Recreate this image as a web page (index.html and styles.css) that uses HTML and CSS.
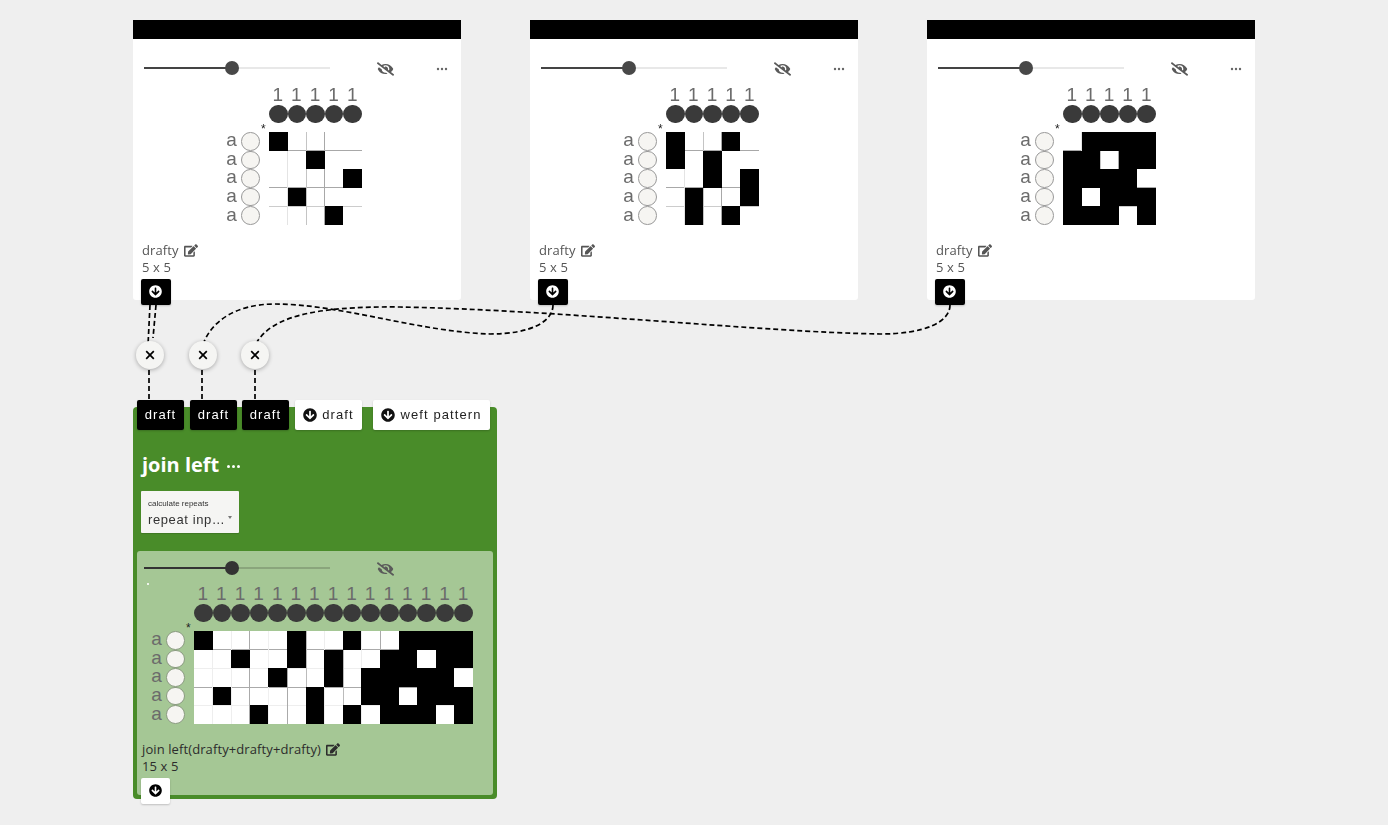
FILE: index.html
```html
<!DOCTYPE html>
<html lang="en">
<head>
<meta charset="utf-8">
<title>Drafts</title>
<link rel="stylesheet" href="styles.css">
</head>
<body>
<svg width="0" height="0" class="defs">
  <symbol id="i-edit" viewBox="0 0 576 512"><path d="M402.6 83.2l90.2 90.2c3.8 3.8 3.8 10 0 13.8L274.4 405.6l-92.8 10.3c-12.4 1.4-22.9-9.1-21.5-21.5l10.3-92.8L388.8 83.2c3.8-3.8 10-3.8 13.8 0zm162-22.9l-48.8-48.8c-15.2-15.2-39.9-15.2-55.2 0l-35.4 35.4c-3.8 3.8-3.8 10 0 13.8l90.2 90.2c3.8 3.8 10 3.8 13.8 0l35.4-35.4c15.2-15.3 15.2-40 0-55.2zM384 346.2V448H64V128h229.8c3.2 0 6.2-1.3 8.5-3.5l40-40c7.6-7.6 2.2-20.5-8.5-20.5H48C21.5 64 0 85.5 0 112v352c0 26.5 21.5 48 48 48h352c26.5 0 48-21.5 48-48V306.2c0-10.7-12.9-16-20.5-8.5l-40 40c-2.2 2.3-3.5 5.3-3.5 8.5z"/></symbol>
  <symbol id="i-down" viewBox="0 0 512 512"><path d="M504 256c0 137-111 248-248 248S8 393 8 256 119 8 256 8s248 111 248 248zm-143.6-28.9L288 300.1V120c0-13.3-10.7-24-24-24h-16c-13.3 0-24 10.7-24 24v180.1l-72.4-73c-9.4-9.5-24.7-9.5-34.1-.1l-10.9 11c-9.4 9.4-9.4 24.6 0 33.9L239 404.3c9.4 9.4 24.6 9.4 33.9 0l132.7-132.4c9.4-9.4 9.4-24.6 0-33.9l-10.9-11c-9.5-9.4-24.8-9.4-34.3.1z"/></symbol>
  <symbol id="i-eye" viewBox="0 0 640 512"><path d="M320 400c-75.85 0-137.25-58.71-142.9-133.11L72.2 185.82c-13.79 17.3-26.48 35.59-36.72 55.59a32.35 32.35 0 0 0 0 29.19C89.71 376.41 197.07 448 320 448c26.91 0 52.87-4 77.89-10.46L346 397.39a144.13 144.13 0 0 1-26 2.61zm313.82 58.1l-110.55-85.44a331.25 331.25 0 0 0 81.25-102.07 32.35 32.35 0 0 0 0-29.19C550.29 135.59 442.93 64 320 64a308.15 308.15 0 0 0-147.32 37.7L45.46 3.37A16 16 0 0 0 23 6.18L3.37 31.45A16 16 0 0 0 6.18 53.9l588.36 454.73a16 16 0 0 0 22.46-2.81l19.64-25.27a16 16 0 0 0-2.82-22.45zm-183.72-142l-39.3-30.38A94.75 94.75 0 0 0 416 256a94.76 94.76 0 0 0-121.31-92.21A47.65 47.65 0 0 1 304 192a46.64 46.64 0 0 1-1.54 10l-73.61-56.89A142.31 142.31 0 0 1 320 112a143.92 143.92 0 0 1 144 144c0 21.63-5.29 41.79-13.9 60.11z"/></symbol>
  <symbol id="i-dots" viewBox="0 0 12 4"><circle cx="2" cy="2" r="1.2"/><circle cx="6" cy="2" r="1.2"/><circle cx="10" cy="2" r="1.2"/></symbol>
  <symbol id="i-x" viewBox="0 0 10 10"><path d="M1.2 1.2l7.6 7.6M8.8 1.2l-7.6 7.6"/></symbol>
</svg>

<main class="canvas">
  <svg class="wires" width="1388" height="825" viewBox="0 0 1388 825">
    <path d="M150 305L148 345M149 370V400M156 305L153 338"/>
    <path d="M553 305C553 322 530 334 490 334C420 332 340 304 275 304C235 304 212 322 204 342M202 370V400"/>
    <path d="M950 305C950 322 925 334 880 334C760 332 560 310 400 307C310 306 272 318 257 342M255 370V400"/>
  </svg>

  <section class="node node-a">
    <div class="node-bar"></div>
    <div class="slider-row">
      <div class="slider"><span class="thumb"></span></div>
      <svg class="eye"><use href="#i-eye"/></svg>
      <svg class="more"><use href="#i-dots"/></svg>
    </div>
    <div class="draft draft-node">
      <div class="nums five"><span>1</span><span>1</span><span>1</span><span>1</span><span>1</span></div>
      <div class="wefts five"><span></span><span></span><span></span><span></span><span></span></div>
      <div class="body">
        <div class="rows"><div class="r"><span>a</span><i></i></div><div class="r"><span>a</span><i></i></div><div class="r"><span>a</span><i></i></div><div class="r"><span>a</span><i></i></div><div class="r"><span>a</span><i></i></div></div>
        <div class="cells five small">
          <i class="on"></i><i></i><i></i><i></i><i></i>
          <i></i><i></i><i class="on"></i><i></i><i></i>
          <i></i><i></i><i></i><i></i><i class="on"></i>
          <i></i><i class="on"></i><i></i><i></i><i></i>
          <i></i><i></i><i></i><i class="on"></i><i></i>
        </div>
      </div>
    </div>
    <div class="meta"><div>drafty <svg class="edit"><use href="#i-edit"/></svg></div><div>5 x 5</div></div>
    <button class="dl"><svg><use href="#i-down"/></svg></button>
  </section>

  <section class="node node-b">
    <div class="node-bar"></div>
    <div class="slider-row">
      <div class="slider"><span class="thumb"></span></div>
      <svg class="eye"><use href="#i-eye"/></svg>
      <svg class="more"><use href="#i-dots"/></svg>
    </div>
    <div class="draft draft-node">
      <div class="nums five"><span>1</span><span>1</span><span>1</span><span>1</span><span>1</span></div>
      <div class="wefts five"><span></span><span></span><span></span><span></span><span></span></div>
      <div class="body">
        <div class="rows"><div class="r"><span>a</span><i></i></div><div class="r"><span>a</span><i></i></div><div class="r"><span>a</span><i></i></div><div class="r"><span>a</span><i></i></div><div class="r"><span>a</span><i></i></div></div>
        <div class="cells five small">
          <i class="on"></i><i></i><i></i><i class="on"></i><i></i>
          <i class="on"></i><i></i><i class="on"></i><i></i><i></i>
          <i></i><i></i><i class="on"></i><i></i><i class="on"></i>
          <i></i><i class="on"></i><i></i><i></i><i class="on"></i>
          <i></i><i class="on"></i><i></i><i class="on"></i><i></i>
        </div>
      </div>
    </div>
    <div class="meta"><div>drafty <svg class="edit"><use href="#i-edit"/></svg></div><div>5 x 5</div></div>
    <button class="dl"><svg><use href="#i-down"/></svg></button>
  </section>

  <section class="node node-c">
    <div class="node-bar"></div>
    <div class="slider-row">
      <div class="slider"><span class="thumb"></span></div>
      <svg class="eye"><use href="#i-eye"/></svg>
      <svg class="more"><use href="#i-dots"/></svg>
    </div>
    <div class="draft draft-node">
      <div class="nums five"><span>1</span><span>1</span><span>1</span><span>1</span><span>1</span></div>
      <div class="wefts five"><span></span><span></span><span></span><span></span><span></span></div>
      <div class="body">
        <div class="rows"><div class="r"><span>a</span><i></i></div><div class="r"><span>a</span><i></i></div><div class="r"><span>a</span><i></i></div><div class="r"><span>a</span><i></i></div><div class="r"><span>a</span><i></i></div></div>
        <div class="cells five small">
          <i></i><i class="on"></i><i class="on"></i><i class="on"></i><i class="on"></i>
          <i class="on"></i><i class="on"></i><i></i><i class="on"></i><i class="on"></i>
          <i class="on"></i><i class="on"></i><i class="on"></i><i class="on"></i><i></i>
          <i class="on"></i><i></i><i class="on"></i><i class="on"></i><i class="on"></i>
          <i class="on"></i><i class="on"></i><i class="on"></i><i></i><i class="on"></i>
        </div>
      </div>
    </div>
    <div class="meta"><div>drafty <svg class="edit"><use href="#i-edit"/></svg></div><div>5 x 5</div></div>
    <button class="dl"><svg><use href="#i-down"/></svg></button>
  </section>

  <button class="unlink u1"><svg><use href="#i-x"/></svg></button>
  <button class="unlink u2"><svg><use href="#i-x"/></svg></button>
  <button class="unlink u3"><svg><use href="#i-x"/></svg></button>

  <section class="op">
    <div class="ports">
      <button class="port in">draft</button>
      <button class="port in">draft</button>
      <button class="port in">draft</button>
      <button class="port out"><svg><use href="#i-down"/></svg>draft</button>
      <button class="port out wide"><svg><use href="#i-down"/></svg>weft pattern</button>
    </div>
    <h2 class="op-title">join left<svg class="op-more"><use href="#i-dots"/></svg></h2>
    <div class="select">
      <div class="select-label">calculate repeats</div>
      <div class="select-value"><span>repeat inp…</span><b class="caret"></b></div>
    </div>
    <div class="result">
      <div class="slider-row">
        <div class="slider slider-dark"><span class="thumb"></span></div>
        <svg class="eye"><use href="#i-eye"/></svg>
      </div>
      <div class="speck"></div>
      <div class="draft draft-op">
        <div class="nums fifteen"><span>1</span><span>1</span><span>1</span><span>1</span><span>1</span><span>1</span><span>1</span><span>1</span><span>1</span><span>1</span><span>1</span><span>1</span><span>1</span><span>1</span><span>1</span></div>
        <div class="wefts fifteen"><span></span><span></span><span></span><span></span><span></span><span></span><span></span><span></span><span></span><span></span><span></span><span></span><span></span><span></span><span></span></div>
        <div class="body">
          <div class="rows"><div class="r"><span>a</span><i></i></div><div class="r"><span>a</span><i></i></div><div class="r"><span>a</span><i></i></div><div class="r"><span>a</span><i></i></div><div class="r"><span>a</span><i></i></div></div>
          <div class="cells fifteen large">
            <i class="on"></i><i></i><i></i><i></i><i></i><i class="on"></i><i></i><i></i><i class="on"></i><i></i><i></i><i class="on"></i><i class="on"></i><i class="on"></i><i class="on"></i>
            <i></i><i></i><i class="on"></i><i></i><i></i><i class="on"></i><i></i><i class="on"></i><i></i><i></i><i class="on"></i><i class="on"></i><i></i><i class="on"></i><i class="on"></i>
            <i></i><i></i><i></i><i></i><i class="on"></i><i></i><i></i><i class="on"></i><i></i><i class="on"></i><i class="on"></i><i class="on"></i><i class="on"></i><i class="on"></i><i></i>
            <i></i><i class="on"></i><i></i><i></i><i></i><i></i><i class="on"></i><i></i><i></i><i class="on"></i><i class="on"></i><i></i><i class="on"></i><i class="on"></i><i class="on"></i>
            <i></i><i></i><i></i><i class="on"></i><i></i><i></i><i class="on"></i><i></i><i class="on"></i><i></i><i class="on"></i><i class="on"></i><i class="on"></i><i></i><i class="on"></i>
          </div>
        </div>
      </div>
      <div class="meta meta-op"><div>join left(drafty+drafty+drafty) <svg class="edit"><use href="#i-edit"/></svg></div><div>15 x 5</div></div>
      <button class="dl dl-light"><svg><use href="#i-down"/></svg></button>
    </div>
  </section>
</main>
</body>
</html>
```
FILE: styles.css
```css
* { box-sizing: border-box; }
html, body { margin: 0; padding: 0; height: 100%; background: #efefef; overflow: hidden; }
button { border: 0; padding: 0; margin: 0; font: inherit; cursor: pointer; }
.defs { position: absolute; }

.canvas { position: relative; width: 1388px; height: 825px; overflow: hidden; font-family: "Open Sans", sans-serif; }

.wires { position: absolute; left: 0; top: 0; z-index: 1; }
.wires path { fill: none; stroke: #000; stroke-width: 1.7; stroke-dasharray: 5 3; }

.node { position: absolute; top: 20px; width: 328px; height: 280px; background: #fff; border-radius: 0 0 3px 3px; }
.node-a { left: 133px; }
.node-b { left: 530px; }
.node-c { left: 927px; }
.node-bar { height: 19px; background: #000; }

.slider-row { display: flex; align-items: center; height: 14px; margin-top: 22px; padding-left: 11px; }
.slider { position: relative; width: 186px; height: 2px; background: linear-gradient(to right, #444 0 88px, #e8e8e8 88px); }
.slider-dark { background: linear-gradient(to right, #333 0 88px, #8aa57c 88px); }
.thumb { position: absolute; left: 81px; top: -6px; width: 14px; height: 14px; border-radius: 50%; background: #484848; }
.slider-dark .thumb { background: #333; }
.eye { width: 17px; height: 14px; margin: 2px 0 0 47px; fill: #5a5a5a; }
.more { width: 12px; height: 4px; margin: 2px 0 0 42px; fill: #666; }

.draft { position: relative; }
.draft-node { margin-left: 136px; margin-top: 11px; }
.draft-op { margin-left: 57px; margin-top: 0; }

.nums, .wefts, .cells { display: grid; grid-auto-rows: 18.6px; }
.five { grid-template-columns: repeat(5, 18.6px); width: 93px; }
.fifteen { grid-template-columns: repeat(15, 18.6px); width: 279px; }
.nums { font: 19px/18px "Liberation Sans", Arial, sans-serif; color: #6b6b6b; text-align: center; }
.nums span { padding-right: 1px; }
.wefts span { border-radius: 50%; background: #3a3a3a; }
.wefts { margin-bottom: 8.8px; position: relative; }
.wefts::after { content: "*"; position: absolute; left: -8px; top: 17px; font: 12px/14px "Liberation Sans", Arial, sans-serif; color: #222; }

.body { position: relative; width: max-content; }
.rows { position: absolute; right: 100%; top: 0; padding-right: 9.5px; }
.r { display: flex; align-items: center; height: 18.6px; gap: 4px; font: 19px/18px "Liberation Sans", Arial, sans-serif; color: #6b6b6b; }
.r span { position: relative; top: -1px; }
.r i { display: block; width: 18.6px; height: 18.6px; border-radius: 50%; background: #f6f5f2; border: 1px solid #999; }
.draft-op .r i { border-color: #8a9a80; }

.cells { position: relative; background: #fff; }
.cells i { display: block; background: #fff; }
.cells i.on { background: #000; }
.cells::after { content: ""; position: absolute; inset: 0; mix-blend-mode: multiply; background-repeat: no-repeat; }
.small::after {
  background-image: linear-gradient(#e4e4e4, #e4e4e4), linear-gradient(#c4c4c4, #c4c4c4), linear-gradient(#a8a8a8, #a8a8a8), linear-gradient(#a8a8a8, #a8a8a8), linear-gradient(#a8a8a8, #a8a8a8), linear-gradient(#ccc, #ccc);
  background-size: 1px 100%, 1px 100%, 1px 100%, 100% 1px, 100% 1px, 100% 1px;
  background-position: 18px 0, 37px 0, 55px 0, 0 18px, 0 55px, 0 74px;
}
.large::after {
  background-image: linear-gradient(#eee, #eee), linear-gradient(#eee, #eee), linear-gradient(#aaa, #aaa), linear-gradient(#f0f0f0, #f0f0f0), linear-gradient(#aaa, #aaa), linear-gradient(#bbb, #bbb), linear-gradient(#eee, #eee), linear-gradient(#bbb, #bbb), linear-gradient(#eee, #eee), linear-gradient(#aaa, #aaa), linear-gradient(#aaa, #aaa), linear-gradient(#eee, #eee), linear-gradient(#aaa, #aaa), linear-gradient(#eee, #eee);
  background-size: 1px 100%, 1px 100%, 1px 100%, 1px 100%, 1px 100%, 1px 100%, 1px 100%, 1px 100%, 1px 100%, 1px 100%, 100% 1px, 100% 1px, 100% 1px, 100% 1px;
  background-position: 18px 0, 37px 0, 55px 0, 74px 0, 93px 0, 112px 0, 130px 0, 149px 0, 167px 0, 186px 0, 0 18px, 0 37px, 0 56px, 0 74px;
}

.meta { margin: 17px 0 0 9px; font-size: 13px; line-height: 17px; letter-spacing: .1px; color: #555; }
.edit { width: 14px; height: 13px; margin-left: 2px; vertical-align: -2px; fill: currentColor; }

.dl { display: flex; align-items: center; justify-content: center; width: 30px; height: 26px; margin: 3px 0 0 8px; padding-right: 1px; background: #000; border-radius: 2px; position: relative; z-index: 2; box-shadow: 0 1px 2px rgba(0,0,0,.2); }
.dl svg { width: 13px; height: 13px; fill: #fff; }
.dl-light { width: 29px; padding-right: 0; background: #fff; }
.dl-light svg { fill: #000; }

.unlink { position: absolute; top: 341px; width: 28px; height: 28px; display: flex; align-items: center; justify-content: center; border-radius: 50%; background: #f5f5f3; box-shadow: 0 1px 4px rgba(0,0,0,.3); z-index: 2; }
.unlink svg { width: 10px; height: 10px; fill: none; stroke: #000; stroke-width: 1.7; }
.u1 { left: 136px; }
.u2 { left: 189px; }
.u3 { left: 241px; }

.op { position: absolute; left: 133px; top: 407px; width: 364px; height: 392px; background: #498c29; border-radius: 4px; }
.ports { display: flex; position: relative; z-index: 3; height: 30px; margin-top: -7px; padding-left: 4px; }
.port { display: flex; align-items: center; justify-content: center; height: 30px; border-radius: 2px; font: 13px/30px "Liberation Sans", Arial, sans-serif; letter-spacing: 1.1px; box-shadow: 0 1px 2px rgba(0,0,0,.2); }
.port.in { width: 47px; margin-right: 6px; background: #000; color: #fff; }
.port.in:nth-child(2) { margin-right: 5px; }
.port.out { width: 67px; margin-right: 11px; background: #fff; color: #222; }
.port.out.wide { width: 117px; margin-right: 0; }
.port svg { width: 14px; height: 14px; margin-right: 5px; fill: #111; }

.op-title { display: flex; align-items: center; margin: 21px 0 0 9px; font: 700 20px/28px "Open Sans", sans-serif; color: #fff; white-space: pre; }
.op-more { width: 17px; height: 5px; margin: 3px 0 0 6px; fill: #fff; }

.select { width: 98px; height: 42px; margin: 12px 0 0 8px; padding: 8px 7px 0; background: #f5f5f3; border-radius: 1px; font-family: "Liberation Sans", Arial, sans-serif; color: #333; box-shadow: 0 1px 1px rgba(0,0,0,.15); }
.select-label { font-size: 8px; line-height: 9px; will-change: transform; }
.select-value { display: flex; align-items: center; justify-content: space-between; margin-top: 3px; font-size: 13px; line-height: 17px; letter-spacing: .6px; will-change: transform; }
.caret { width: 0; height: 0; margin-top: -4px; border: 2px solid transparent; border-top: 3px solid #777; border-bottom: 0; }

.result { width: 356px; height: 244px; margin: 18px 0 0 4px; background: #a5c795; border-radius: 3px; }
.result .slider-row { padding-left: 7px; margin-top: 0; position: relative; top: 10px; }
.speck { width: 2px; height: 2px; margin: 18px 0 0 10px; background: #eef4ea; }
.meta-op { margin: 17px 0 0 5px; color: #2c2c2c; }
.result .dl { margin: 3px 0 0 4px; }
```
